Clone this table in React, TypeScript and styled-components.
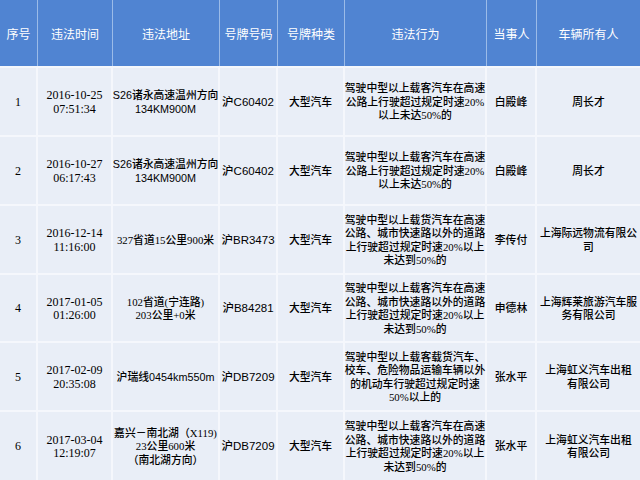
import React from "react";
import styled, { createGlobalStyle } from "styled-components";

const GlobalStyle = createGlobalStyle`
  html, body {
    margin: 0;
    padding: 0;
    width: 640px;
    height: 480px;
    overflow: hidden;
    background: #e9eef7;
  }
`;

const COLS = "38px 75px 107px 58px 67px 142px 50px 1fr";

const Table = styled.div`
  display: grid;
  grid-template-rows: 68px 69px 69px 69px 68px 69px 68px;
  width: 640px;
  height: 480px;
`;

const HeadRow = styled.div`
  display: grid;
  grid-template-columns: ${COLS};
  background: #5084d2;
  border-bottom: 2px solid #f4f7fc;
`;

const HeadCell = styled.div`
  display: flex;
  align-items: center;
  justify-content: center;
  color: #ffffff;
  font-family: "Noto Sans CJK SC", sans-serif;
  font-size: 12px;
  border-right: 1px solid #9bbbe8;
  &:last-child {
    border-right: none;
  }
`;

const Row = styled.div`
  display: grid;
  grid-template-columns: ${COLS};
  background: #e9eef7;
  border-bottom: 2px solid #f5f7fc;
  &:last-child {
    border-bottom: none;
  }
`;

const Cell = styled.div<{ $font?: "serif" | "sans"; $size?: number }>`
  display: flex;
  align-items: center;
  justify-content: center;
  text-align: center;
  white-space: nowrap;
  color: #000000;
  font-weight: 500;
  font-family: ${(p) =>
    p.$font === "sans"
      ? `"Liberation Sans", "Noto Sans CJK SC", sans-serif`
      : `"Liberation Serif", "Noto Sans CJK SC", serif`};
  font-size: ${(p) => p.$size ?? 10.8}px;
  line-height: 13.5px;
  padding-top: 2px;
  border-right: 2px solid #f5f7fc;
  &:last-child {
    border-right: none;
  }
`;

type Rec = {
  no: string;
  time: string[];
  place: string[];
  placeFont: "serif" | "sans";
  plate: string;
  act: string[];
  person: string;
  owner: string[];
};

const rows: Rec[] = [
  {
    no: "1",
    time: ["2016-10-25", "07:51:34"],
    place: ["S26诸永高速温州方向", "134KM900M"],
    placeFont: "sans",
    plate: "沪C60402",
    act: ["驾驶中型以上载客汽车在高速", "公路上行驶超过规定时速20%", "以上未达50%的"],
    person: "白殿峰",
    owner: ["周长才"],
  },
  {
    no: "2",
    time: ["2016-10-27", "06:17:43"],
    place: ["S26诸永高速温州方向", "134KM900M"],
    placeFont: "sans",
    plate: "沪C60402",
    act: ["驾驶中型以上载客汽车在高速", "公路上行驶超过规定时速20%", "以上未达50%的"],
    person: "白殿峰",
    owner: ["周长才"],
  },
  {
    no: "3",
    time: ["2016-12-14", "11:16:00"],
    place: ["327省道15公里900米"],
    placeFont: "serif",
    plate: "沪BR3473",
    act: ["驾驶中型以上载货汽车在高速", "公路、城市快速路以外的道路", "上行驶超过规定时速20%以上", "未达到50%的"],
    person: "李传付",
    owner: ["上海际远物流有限公", "司"],
  },
  {
    no: "4",
    time: ["2017-01-05", "01:26:00"],
    place: ["102省道(宁连路)", "203公里+0米"],
    placeFont: "serif",
    plate: "沪B84281",
    act: ["驾驶中型以上载客汽车在高速", "公路、城市快速路以外的道路", "上行驶超过规定时速20%以上", "未达到50%的"],
    person: "申德林",
    owner: ["上海辉莱旅游汽车服", "务有限公司"],
  },
  {
    no: "5",
    time: ["2017-02-09", "20:35:08"],
    place: ["沪瑞线0454km550m"],
    placeFont: "sans",
    plate: "沪DB7209",
    act: ["驾驶中型以上载客载货汽车、", "校车、危险物品运输车辆以外", "的机动车行驶超过规定时速", "50%以上的"],
    person: "张水平",
    owner: ["上海虹义汽车出租", "有限公司"],
  },
  {
    no: "6",
    time: ["2017-03-04", "12:19:07"],
    place: ["嘉兴－南北湖（X119)", "23公里600米", "（南北湖方向）"],
    placeFont: "serif",
    plate: "沪DB7209",
    act: ["驾驶中型以上载客汽车在高速", "公路、城市快速路以外的道路", "上行驶超过规定时速20%以上", "未达到50%的"],
    person: "张水平",
    owner: ["上海虹义汽车出租", "有限公司"],
  },
];

const heads = ["序号", "违法时间", "违法地址", "号牌号码", "号牌种类", "违法行为", "当事人", "车辆所有人"];

const Lines: React.FC<{ lines: string[] }> = ({ lines }) => (
  <div>
    {lines.map((l, i) => (
      <div key={i}>{l}</div>
    ))}
  </div>
);

const App: React.FC = () => {
  return (
    <>
      <GlobalStyle />
      <Table>
        <HeadRow>
          {heads.map((h) => (
            <HeadCell key={h}>{h}</HeadCell>
          ))}
        </HeadRow>
        {rows.map((r) => (
          <Row key={r.no}>
            <Cell $size={12}>{r.no}</Cell>
            <Cell $size={12}>
              <Lines lines={r.time} />
            </Cell>
            <Cell $font={r.placeFont}>
              <Lines lines={r.place} />
            </Cell>
            <Cell $font="sans" $size={11.5}>{r.plate}</Cell>
            <Cell>大型汽车</Cell>
            <Cell>
              <Lines lines={r.act} />
            </Cell>
            <Cell>{r.person}</Cell>
            <Cell>
              <Lines lines={r.owner} />
            </Cell>
          </Row>
        ))}
      </Table>
    </>
  );
};

export default App;
